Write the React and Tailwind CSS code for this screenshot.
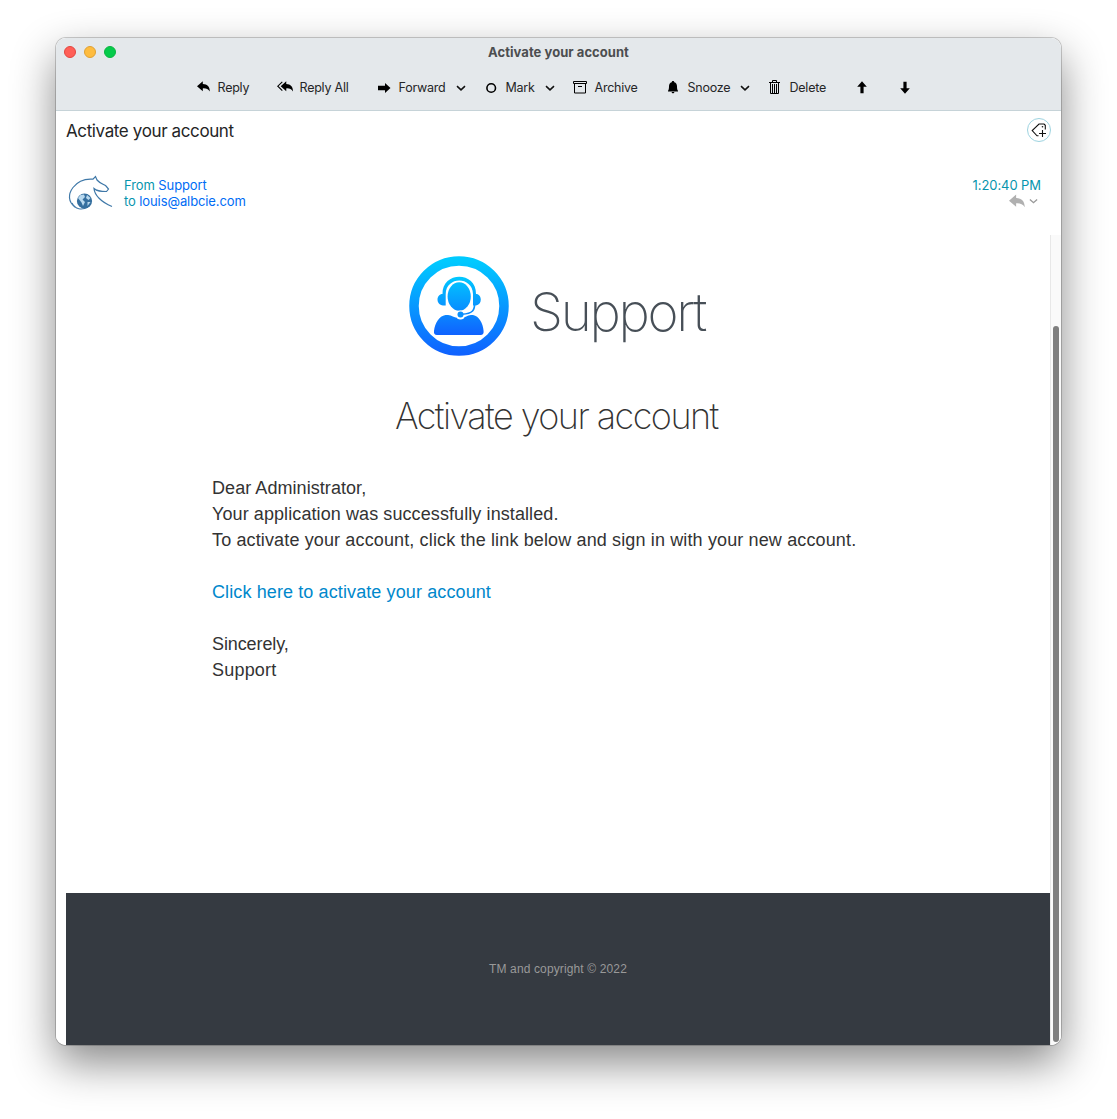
const ReplyShape = "M0 5.2 L5.8 .3 V3 C10.5 3.2 12.800 5.800 12.800 10.5 C11.1 8 9.1 7.2 5.800 7.4 V10.2 Z";

function ReplyIcon() {
  return (
    <svg width="14" height="12" viewBox="0 0 14 12" className="-mt-[2px]">
      <path d={ReplyShape} />
    </svg>
  );
}

function ReplyAllIcon() {
  return (
    <svg width="17" height="12" viewBox="0 0 17 12" className="-mt-[2px]">
      <path d="M5.3 .8 L.8 5.2 L5.3 9.600" fill="none" stroke="#000" strokeWidth="1.1" />
      <path d={ReplyShape} transform="translate(3.700 0) scale(.96 1)" />
    </svg>
  );
}

function ArrowIcon() {
  return (
    <svg width="13" height="12" viewBox="0 0 13 12" className="-mt-px">
      <path d="M0 3.800 H7 V.9 L12.5 6 L7 11.1 V8.200 H0 Z" />
    </svg>
  );
}

function VerticalArrow({ down }) {
  return (
    <svg width="10" height="13" viewBox="0 0 10 13" className={down ? "-mt-[2px] rotate-180" : "-mt-px"}>
      <path d="M5 .3 L9.800 5.700 H6.600 V12.3 H3.4 V5.700 H.2 Z" />
    </svg>
  );
}

function MarkIcon() {
  return (
    <svg width="11" height="12" viewBox="0 0 11 12" className="-mt-px">
      <circle cx="5.2" cy="6" r="4.3" fill="none" stroke="#000" strokeWidth="1.600" />
    </svg>
  );
}

function ArchiveIcon() {
  return (
    <svg width="14" height="13" viewBox="0 0 14 13" fill="none" stroke="#000" className="-mt-[2px]">
      <path d="M.5 .5 H13.5 V2.5 H.5 Z M1.5 2.5 V12 H12.5 V2.5 M5 5.5 H9" />
    </svg>
  );
}

function BellIcon() {
  return (
    <svg width="11" height="13" viewBox="0 0 11 13" className="-mt-px">
      <path d="M5 0 C5.8 0 6.2 .5 6.3 1.2 C8.2 1.8 9 3.3 9 5.2 C9 7.8 9.4 9 10 9.8 V10.5 H0 V9.8 C.6 9 1 7.8 1 5.2 C1 3.3 1.8 1.8 3.7 1.2 C3.8 .5 4.2 0 5 0 Z M3.6 11 H6.4 C6.3 12 5.8 12.3 5 12.3 C4.2 12.3 3.7 12 3.6 11 Z" />
    </svg>
  );
}

function TrashIcon() {
  return (
    <svg width="11" height="14" viewBox="0 0 11 14" fill="none" stroke="#000" className="-mt-[2px]">
      <path d="M0 2.5 H11 M3.5 2.5 V.5 H7.5 V2.5 M1.5 2.5 V13.5 H9.5 V2.5 M3.5 4 V13 M5.5 4 V13 M7.5 4 V13" />
    </svg>
  );
}

function Chevron({ color = "#111", width = 10, stroke = 1.6 }) {
  return (
    <svg width={width} height="7" viewBox="0 0 10 7" fill="none" stroke={color} strokeWidth={stroke}>
      <path d="M1 1.2 L5 4.8 L9 1.2" />
    </svg>
  );
}

function Action({ icon, iconBox, label, labelBox, menu, box }) {
  return (
    <button className={`flex h-5 shrink-0 items-center text-left ${box}`}>
      <span className={`flex shrink-0 items-center ${iconBox}`}>{icon}</span>
      <span className={`shrink-0 whitespace-nowrap ${labelBox}`}>{label}</span>
      {menu && <Chevron />}
    </button>
  );
}

function TitleBar() {
  return (
    <header className="h-[73px] shrink-0 border-b border-[#c6d3d8] bg-[#e4e8eb]">
      <div className="grid h-7 grid-cols-[1fr_auto_1fr] items-center pl-2">
        <div className="flex gap-2">
          <span className="size-3 rounded-full border border-[#e2463f] bg-[#ff5f57]" />
          <span className="size-3 rounded-full border border-[#dfa032] bg-[#febc3f]" />
          <span className="size-3 rounded-full border border-[#0bb440] bg-[#05cb4b]" />
        </div>
        <h1 className="-mt-px mr-2 text-[13px] leading-4 font-bold tracking-[0.05px] text-[#4c4e50]">Activate your account</h1>
      </div>
      <nav className="mt-3 flex pl-[141px] text-[12.5px] leading-5 tracking-[-0.23px] text-[#252627]">
        <Action icon={<ReplyIcon />} iconBox="w-[20.5px]" label="Reply" box="w-20" />
        <Action icon={<ReplyAllIcon />} iconBox="w-[22.5px]" label="Reply All" box="w-[101px]" />
        <Action icon={<ArrowIcon />} iconBox="w-[20.5px]" label="Forward" labelBox="w-[57.5px]" menu box="w-[108px]" />
        <Action icon={<MarkIcon />} iconBox="w-[19.5px]" label="Mark" labelBox="w-[39.5px]" menu box="w-[87px]" />
        <Action icon={<ArchiveIcon />} iconBox="w-[21.5px]" label="Archive" box="w-[95px]" />
        <Action icon={<BellIcon />} iconBox="w-[19.5px]" label="Snooze" labelBox="w-[52.5px]" menu box="w-[101px]" />
        <Action icon={<TrashIcon />} iconBox="w-[20.5px]" label="Delete" box="w-[87.5px]" />
        <Action icon={<VerticalArrow />} box="w-[43px]" />
        <Action icon={<VerticalArrow down />} box="w-5" />
      </nav>
    </header>
  );
}

function HorseLogo() {
  return (
    <svg width="46" height="38" viewBox="0 0 46 38" fill="none" stroke="#3f78a8" strokeWidth="1.2">
      <path d="M7 32 C0 27 0 19 5 12.5 C10 6 17 3.5 25 4.2 L27.5 1.5 L29 5 C32 8.500 36 9.5 38 11 L40.5 14 L38.5 16.500 C33 16.500 29 16.500 26 13.5 C26.500 20 33 27 44 31.5" />
      <path d="M4 28 C7 34.5 14 35.500 20 32" strokeWidth="1.1" />
      <circle cx="16.500" cy="26" r="7.600" fill="#356f9f" stroke="none" />
      <path d="M10 23 L12.500 20 L16 19.5 L17 22 L14.5 24.5 L17 27 L15 31 L13.5 27.500 Z M19 20 L22.500 23 L20.5 25 L18 23 Z M19.500 27 L22.500 27 L19.500 31 Z" fill="#b8d8ee" stroke="none" />
    </svg>
  );
}

function TagButton() {
  return (
    <button className="grid size-6 place-items-center rounded-full border border-[#9dd3e0]">
      <svg width="16" height="16" viewBox="0 0 16 16" fill="none" stroke="#111" strokeWidth="1.1">
        <path d="M7.500 13.800 H6 L1.200 8.500 L8 2 H13 L14.300 3.300 V7.500" />
        <path d="M11.500 8 V15 M8 11.500 H15" />
        <circle cx="11.5" cy="4.800" r=".8" fill="#111" stroke="none" />
      </svg>
    </button>
  );
}

function MessageHeader() {
  return (
    <section className="h-[124px] shrink-0 bg-white">
      <div className="flex h-10 items-start justify-between pt-[7px] pr-[10px] pl-[10px]">
        <h2 className="text-[17px] leading-[26px] tracking-[-0.38px] text-[#242526]">Activate your account</h2>
        <TagButton />
      </div>
      <div className="mt-6 flex pl-3">
        <HorseLogo />
        <div className="mt-[2px] ml-[10px] flex-1 text-[13px] leading-4 tracking-[-0.1px] text-[#006cf5]">
          <p><span className="text-[#0795ae]">From</span> Support</p>
          <p><span className="text-[#0795ae]">to</span> louis@albcie.com</p>
        </div>
        <div className="mt-[2px] mr-5 flex flex-col items-end text-[13px] leading-4 tracking-[-0.08px] text-[#0795ae]">
          <span>1:20:40 PM</span>
          <span className="mt-px mr-[3px] flex items-center gap-1">
            <svg width="16" height="14" viewBox="0 0 13 11" fill="#b0b0b0"><path d={ReplyShape} /></svg>
            <Chevron color="#999" width={9} stroke={1.5} />
          </span>
        </div>
      </div>
    </section>
  );
}

function SupportLogo() {
  return (
    <svg width="100" height="100" viewBox="0 0 100 100">
      <defs>
        <linearGradient id="ring" x1="0" y1="0" x2="0" y2="100" gradientUnits="userSpaceOnUse">
          <stop offset=".05" stopColor="#00caff" />
          <stop offset="1" stopColor="#1060ff" />
        </linearGradient>
        <linearGradient id="agent" x1="0" y1="20" x2="0" y2="80" gradientUnits="userSpaceOnUse">
          <stop stopColor="#00caff" />
          <stop offset="1" stopColor="#1060ff" />
        </linearGradient>
      </defs>
      <circle cx="50" cy="50" r="45" fill="none" stroke="url(#ring)" strokeWidth="9.500" />
      <g fill="url(#agent)">
        <path d="M36.500 59 H39 C43 59 44 62 51 62 C57 62 58 59 62 59 H64 C70 60 74 67 74.600 75 Q75 79 71.500 79 H28 Q24.500 79 25 75 C26 67 30 60 36.500 59 Z" />
        <ellipse cx="50.200" cy="40.500" rx="11.600" ry="14.300" />
        <path d="M33.500 38 C33 15 67.500 15 67 38 C70 38 71.800 40.500 71.800 43.500 C71.800 46.500 70 49 67 49.500 H64 V38 C63.500 20 37 20 36.700 38 V49.500 H34 C30.500 49 28.500 46.500 28.500 43.500 C28.500 40.500 30.500 38 33.500 38 Z" />
      </g>
      <circle cx="51.500" cy="59" r="4.600" fill="white" />
      <path d="M65.500 47 C66 54 64 57.500 53 58.300" fill="none" stroke="url(#agent)" strokeWidth="1.600" />
      <circle cx="51.500" cy="58.500" r="3" fill="#0991ff" />
    </svg>
  );
}

function MailBody() {
  return (
    <div className="flex min-h-0 flex-1 bg-white pl-[10px]">
      <main className="flex w-[984px] shrink-0 flex-col font-['Liberation_Sans',sans-serif] text-[#333]">
        <div className="mt-[21px] flex h-[100px] pl-[343px] font-['Inter',sans-serif]">
          <SupportLogo />
          <span className="ml-[21px] pt-[21px] text-[53px] leading-[70px] font-extralight tracking-[-2.3px] text-[#474f57]">Support</span>
        </div>
        <h2 className="mt-9 h-12 pl-[329px] font-['Inter',sans-serif] text-[36px] leading-[48px] font-extralight tracking-[-1.55px] whitespace-nowrap">Activate your account</h2>
        <div className="mt-[35px] pl-[146px] text-[18px] leading-[26px] whitespace-nowrap">
          <p className="tracking-[0.06px]">Dear Administrator,</p>
          <p className="tracking-[0.09px]">Your application was successfully installed.</p>
          <p className="tracking-[0.135px]">To activate your account, click the link below and sign in with your new account.</p>
          <p className="mt-[26px] tracking-[0.11px] text-[#0088cc]"><a>Click here to activate your account</a></p>
          <p className="mt-[26px] tracking-[-0.1px]">Sincerely,</p>
          <p className="tracking-[0.2px]">Support</p>
        </div>
        <footer className="mt-auto flex h-[152px] items-center justify-center bg-[#353a41] text-[12px] tracking-[0.13px] text-[#999]">
          TM and copyright © 2022
        </footer>
      </main>
      <div className="flex flex-1 flex-col border-l border-[#e8e8e8] bg-[#fafafa] pt-[91px] pb-[3px] pl-[2px]">
        <div className="w-[6px] flex-1 rounded-full bg-[#7f7f7f]" />
      </div>
    </div>
  );
}

export default function App() {
  return (
    <div className="h-[1119px] w-[1117px] overflow-hidden bg-white pt-[38px] pl-14 font-['Inter',sans-serif]">
      <div className="h-[1007px] w-[1005px] rounded-[10px] shadow-[0_0_0_1px_#00000030,0_18px_44px_#00000078]">
        <div className="flex h-full flex-col overflow-hidden rounded-[10px] bg-white">
          <TitleBar />
          <MessageHeader />
          <MailBody />
        </div>
      </div>
    </div>
  );
}
